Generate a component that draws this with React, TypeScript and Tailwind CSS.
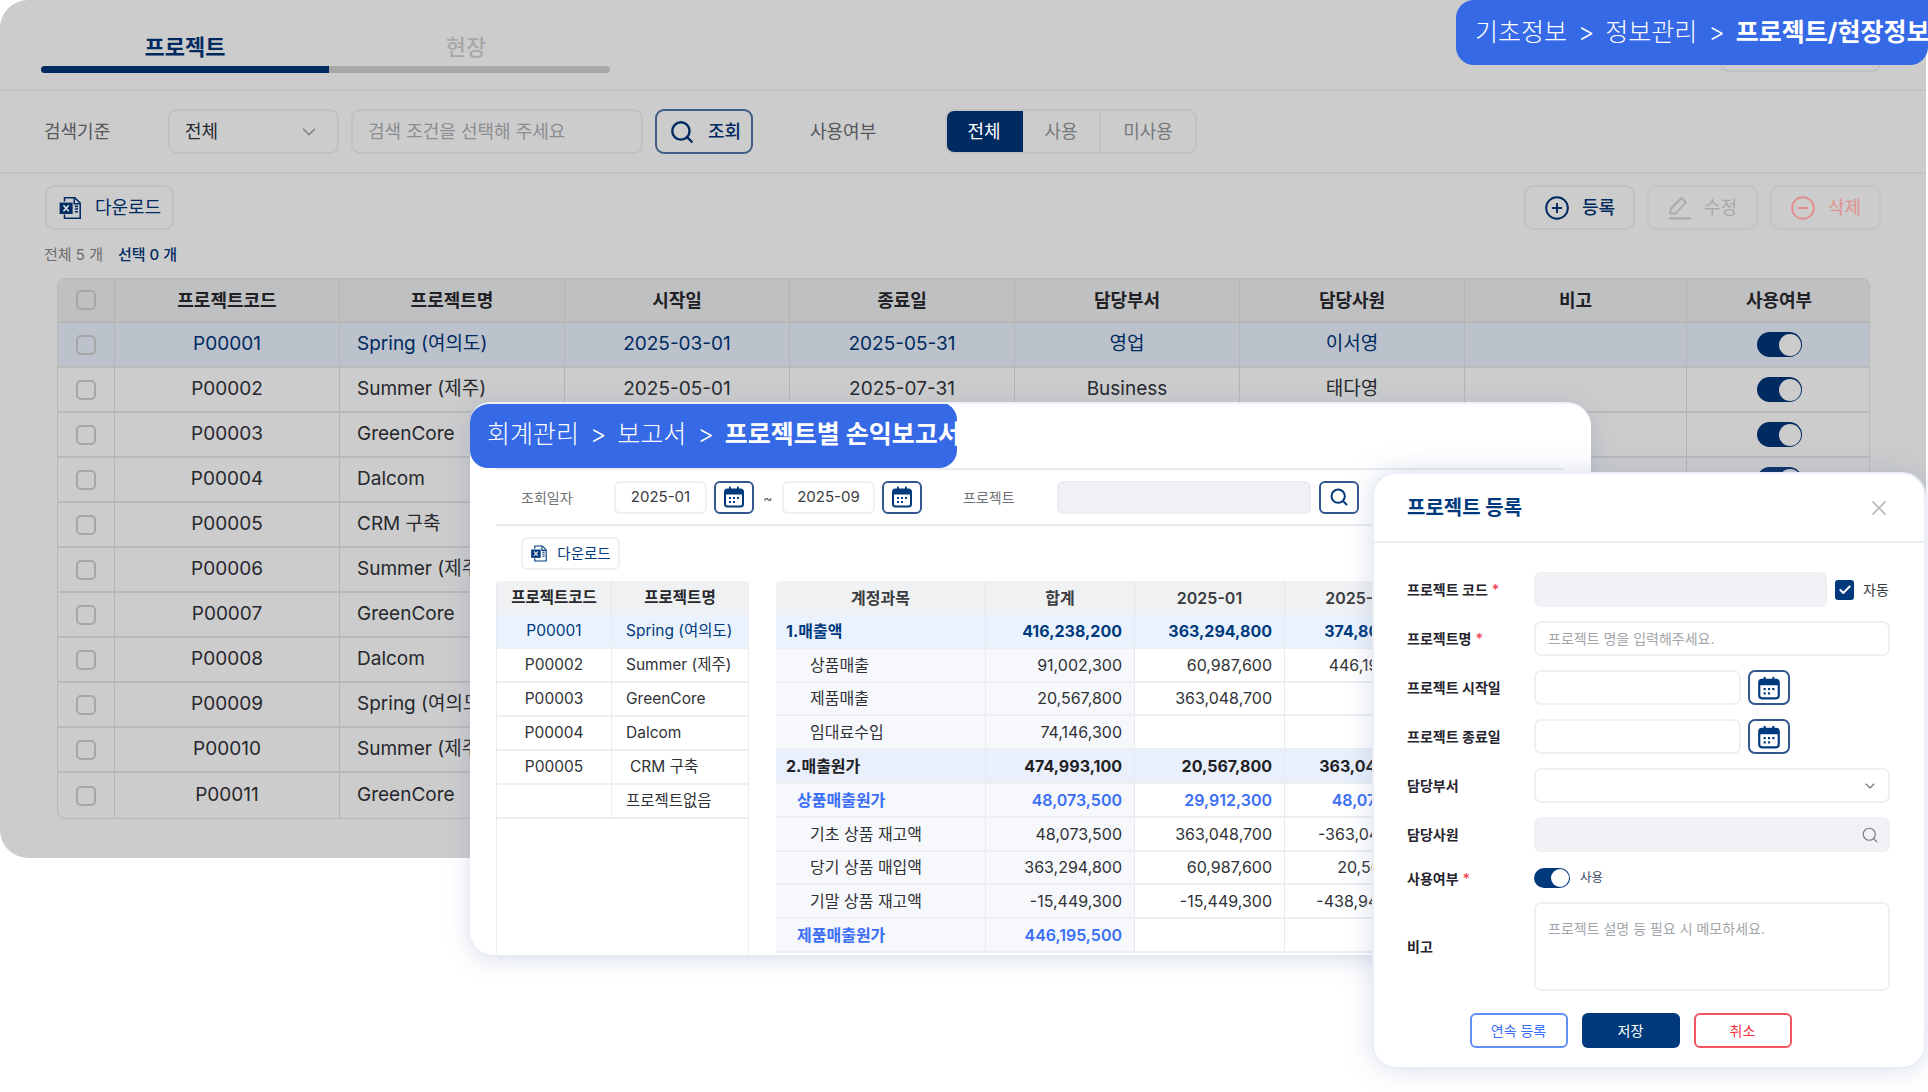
import React from "react";
import { Search, ChevronDown, CirclePlus, CircleMinus, X, Check } from "lucide-react";

const backRows = [
  ["P00001", "Spring (여의도)", "2025-03-01", "2025-05-31", "영업", "이서영"],
  ["P00002", "Summer (제주)", "2025-05-01", "2025-07-31", "Business", "태다영"],
  ["P00003", "GreenCore", "2025-06-01", "2025-08-31", "영업", "이서영"],
  ["P00004", "Dalcom", "2025-07-01", "2025-09-30", "Business", "태다영"],
  ["P00005", "CRM 구축", "2025-07-01", "2025-09-30", "영업", "이서영"],
  ["P00006", "Summer (제주)", "2025-08-01", "2025-10-31", "Business", "태다영"],
  ["P00007", "GreenCore", "2025-08-01", "2025-10-31", "영업", "이서영"],
  ["P00008", "Dalcom", "2025-09-01", "2025-11-30", "Business", "태다영"],
  ["P00009", "Spring (여의도)", "2025-09-01", "2025-11-30", "영업", "이서영"],
  ["P00010", "Summer (제주)", "2025-10-01", "2025-12-31", "Business", "태다영"],
  ["P00011", "GreenCore", "2025-10-01", "2025-12-31", "영업", "이서영"],
];

const reportLeft = [
  ["P00001", "Spring (여의도)"],
  ["P00002", "Summer (제주)"],
  ["P00003", "GreenCore"],
  ["P00004", "Dalcom"],
  ["P00005", "CRM 구축"],
  ["", "프로젝트없음"],
];

type Kind = "head1" | "head2" | "sub" | "item";
const reportRight: { k: Kind; v: string[] }[] = [
  { k: "head1", v: ["1.매출액", "416,238,200", "363,294,800", "374,800,100"] },
  { k: "item", v: ["상품매출", "91,002,300", "60,987,600", "446,195,500"] },
  { k: "item", v: ["제품매출", "20,567,800", "363,048,700", ""] },
  { k: "item", v: ["임대료수입", "74,146,300", "", ""] },
  { k: "head2", v: ["2.매출원가", "474,993,100", "20,567,800", "363,048,700"] },
  { k: "sub", v: ["상품매출원가", "48,073,500", "29,912,300", "48,073,500"] },
  { k: "item", v: ["기초 상품 재고액", "48,073,500", "363,048,700", "-363,048,700"] },
  { k: "item", v: ["당기 상품 매입액", "363,294,800", "60,987,600", "20,567,800"] },
  { k: "item", v: ["기말 상품 재고액", "-15,449,300", "-15,449,300", "-438,949,300"] },
  { k: "sub", v: ["제품매출원가", "446,195,500", "", ""] },
];

function ExcelIcon({ size, color }: { size: number; color: string }) {
  return (
    <svg width={size} height={size} viewBox="0 0 24 24" fill="none">
      <path d="M6 6V2.5h9.5L20.5 7.5V21.5H6V18" stroke={color} strokeWidth="1.4" />
      <path d="M15 3v5h5" stroke={color} strokeWidth="1.4" />
      <rect x="1.5" y="7" width="12" height="10.5" fill={color} />
      <path d="M5 9.5l5 5.5M10 9.5l-5 5.5" stroke="#dfe3ea" strokeWidth="1.5" />
      <path d="M15.5 10.5h3M15.5 13h3M15.5 15.5h3" stroke={color} strokeWidth="1.4" />
    </svg>
  );
}

function CalendarIcon({ size }: { size: number }) {
  return (
    <svg width={size} height={size} viewBox="0 0 24 24" fill="none">
      <rect x="3" y="4.5" width="18" height="17" rx="2.5" stroke="#003a7d" strokeWidth="2" />
      <path d="M3 9.5V6.5a2 2 0 0 1 2-2h14a2 2 0 0 1 2 2v3z" fill="#003a7d" />
      <path d="M8 2.5v4M16 2.5v4" stroke="#003a7d" strokeWidth="2" strokeLinecap="round" />
      <rect x="7" y="12" width="2" height="2" fill="#003a7d" />
      <rect x="11" y="12" width="2" height="2" fill="#003a7d" />
      <rect x="15" y="12" width="2" height="2" fill="#003a7d" />
      <rect x="7" y="16" width="2" height="2" fill="#003a7d" />
      <rect x="11" y="16" width="2" height="2" fill="#003a7d" />
    </svg>
  );
}

function PenIcon() {
  return (
    <svg width="24" height="24" viewBox="0 0 24 24" fill="none" stroke="#a9a9a9" strokeWidth="1.8">
      <path d="M2 17.5l1-5L13.5 2l4.5 4.5L7.5 17.5z" strokeLinejoin="round" />
      <path d="M1 22.5h22" strokeWidth="2.2" />
    </svg>
  );
}

function BackToggle() {
  return (
    <div className="w-[45px] h-[25px] rounded-full bg-[#002a60] flex items-center justify-end pr-[1px]">
      <div className="w-[22px] h-[22px] rounded-full bg-[#cccccc]" />
    </div>
  );
}

function BackCheckbox() {
  return <div className="w-[20px] h-[20px] rounded-[5px] border-2 border-[#a6a6a6]" />;
}

function BackTable() {
  const cols = "grid grid-cols-[57px_225px_225px_225px_225px_225px_225px_222px_184px]";
  const heads = ["프로젝트코드", "프로젝트명", "시작일", "종료일", "담당부서", "담당사원", "비고", "사용여부"];
  return (
    <div className="ml-[57px] mt-[12px] w-[1813px] rounded-[8px] border border-[#b8b8b8] overflow-hidden">
      <div className={`${cols} h-[44px] bg-[#bfc0c2] border-b-2 border-[#b6b6b6]`}>
        <div className="flex items-center justify-center border-r border-[#b4b4b4]">
          <BackCheckbox />
        </div>
        {heads.map((h, i) => (
          <div
            key={h}
            className={`flex items-center justify-center text-[18px] font-semibold text-[#1f2125] ${i < 7 ? "border-r border-[#b4b4b4]" : ""}`}
          >
            {h}
          </div>
        ))}
      </div>
      {backRows.map((r, idx) => {
        const sel = idx === 0;
        const tc = sel ? "text-[#002a60]" : "text-[#26282c]";
        return (
          <div
            key={r[0]}
            className={`${cols} h-[45px] border-b-2 border-[#b9b9b9] last:border-b-0 ${sel ? "bg-[#bbc2cc]" : ""} text-[19px] ${tc}`}
          >
            <div className="flex items-center justify-center border-r border-[#b4b4b4]">
              <BackCheckbox />
            </div>
            {r.map((c, i) => (
              <div
                key={i}
                className={`flex items-center border-r border-[#b4b4b4] whitespace-nowrap ${i === 1 ? "justify-start pl-[17px]" : "justify-center"}`}
              >
                {c}
              </div>
            ))}
            <div className="border-r border-[#b4b4b4]" />
            <div className="flex items-center justify-center">
              <BackToggle />
            </div>
          </div>
        );
      })}
    </div>
  );
}

function BackWindow() {
  const actionBtn = "w-[111px] h-[45px] rounded-[9px] border-2 flex items-center justify-center gap-[12px] text-[18px]";
  return (
    <div className="w-[1926px] h-[858px] bg-[#cccccc] rounded-l-[28px] overflow-hidden">
      <div className="h-[91px] border-b-2 border-[#c2c2c2] pl-[41px] pr-[45px] flex justify-between">
        <div className="w-[569px] pt-[31px]">
          <div className="flex h-[35px]">
            <div className="w-[288px] text-center text-[22px] font-bold text-[#002a60] leading-[32px]">프로젝트</div>
            <div className="w-[274px] text-center text-[22px] font-medium text-[#a8a8a8] leading-[32px]">현장</div>
          </div>
          <div className="h-[7px] rounded-full bg-[#a8a8a8] overflow-hidden">
            <div className="w-[288px] h-full bg-[#002a60]" />
          </div>
        </div>
        <div className="mt-[27px] w-[161px] h-[45px] rounded-[9px] border-2 border-[#bfc0c2]" />
      </div>

      <div className="h-[83px] border-b-2 border-[#c2c2c2] pl-[44px] flex items-center text-[18px]">
        <div className="w-[124px] text-[#55575b]">검색기준</div>
        <div className="w-[171px] h-[45px] rounded-[9px] border-2 border-[#bfc1c5] flex items-center justify-between pl-[15px] pr-[17px] text-[#26282c]">
          전체
          <ChevronDown size={22} strokeWidth={1.6} color="#7c7f85" />
        </div>
        <div className="ml-[12px] w-[292px] h-[45px] rounded-[9px] border-2 border-[#bfc1c5] flex items-center pl-[15px] text-[#8b8d91]">
          검색 조건을 선택해 주세요
        </div>
        <div className="ml-[12px] w-[98px] h-[45px] rounded-[9px] border-2 border-[#3e5c85] flex items-center pl-[12px] gap-[13px] text-[#002a60]">
          <Search size={26} strokeWidth={2.2} color="#002a60" />
          <span className="font-medium">조회</span>
        </div>
        <div className="ml-[57px] w-[135px] text-[#55575b]">사용여부</div>
        <div className="flex h-[45px] rounded-[9px] border-2 border-[#bfc1c5] overflow-hidden">
          <div className="-m-[2px] mr-0 w-[78px] bg-[#002a60] text-white flex items-center justify-center rounded-l-[9px]">전체</div>
          <div className="w-[78px] flex items-center justify-center text-[#77797d] border-r-2 border-[#bfc1c5]">사용</div>
          <div className="w-[94px] flex items-center justify-center text-[#77797d]">미사용</div>
        </div>
      </div>

      <div className="pt-[11px] pl-[45px] pr-[45px] flex justify-between">
        <div className="w-[129px] h-[45px] rounded-[9px] border-2 border-[#bfc1c5] flex items-center justify-center gap-[11px] text-[18px] text-[#002a60]">
          <ExcelIcon size={26} color="#002a60" />
          다운로드
        </div>
        <div className="flex gap-[12px]">
          <div className={`${actionBtn} border-[#bfc1c5] text-[#002a60] font-medium`}>
            <CirclePlus size={26} strokeWidth={1.8} color="#002a60" />
            등록
          </div>
          <div className={`${actionBtn} border-[#c4c5c7] text-[#a9a9a9]`}>
            <PenIcon />
            수정
          </div>
          <div className={`${actionBtn} border-[#c4c5c7] text-[#e09090]`}>
            <CircleMinus size={26} strokeWidth={1.8} color="#e09090" />
            삭제
          </div>
        </div>
      </div>

      <div className="pl-[44px] mt-[14px] h-[22px] flex items-center gap-[15px] text-[15px]">
        <span className="text-[#6a6c70]">전체 5 개</span>
        <span className="text-[#002a60] font-medium">선택 0 개</span>
      </div>

      <BackTable />
    </div>
  );
}

function Breadcrumb({ a, b, c, className }: { a: string; b: string; c: string; className: string }) {
  return (
    <div className={`bg-[#3669e5] text-white flex items-center text-[25px] whitespace-nowrap ${className}`}>
      <span className="font-light">{a}</span>
      <span className="mx-[11px] font-light">&gt;</span>
      <span className="font-light">{b}</span>
      <span className="mx-[11px] font-light">&gt;</span>
      <span className="font-bold">{c}</span>
    </div>
  );
}

function ReportLeft() {
  const cols = "grid grid-cols-[115px_1fr]";
  return (
    <div className="w-[253px] border-x border-[#e9ecf1] rounded-t-[4px] overflow-hidden flex flex-col text-[15.5px]">
      <div className={`${cols} h-[34px] bg-[#f0f1f3] font-semibold text-[#26282c] text-center`}>
        <div className="flex items-center justify-center border-r border-[#e2e4e8]">프로젝트코드</div>
        <div className="flex items-center justify-center">프로젝트명</div>
      </div>
      {reportLeft.map((r, i) => (
        <div
          key={i}
          className={`${cols} h-[34px] border-b-2 border-[#eceef2] ${i === 0 ? "bg-[#eaf3fd] text-[#003a7d]" : "text-[#303236]"}`}
        >
          <div className="flex items-center justify-center border-r border-[#e9ecf1]">{r[0]}</div>
          <div className={`flex items-center ${r[0] === "P00005" ? "pl-[18px]" : "pl-[14px]"}`}>{r[1]}</div>
        </div>
      ))}
    </div>
  );
}

function ReportRight() {
  const cols = "grid grid-cols-[210px_149px_150px_150px]";
  return (
    <div className="w-[660px] flex flex-col text-[16px]">
      <div className={`${cols} h-[34px] bg-[#f0f1f3] font-semibold text-[#3a3c40] rounded-tl-[4px]`}>
        {["계정과목", "합계", "2025-01", "2025-02"].map((h) => (
          <div key={h} className="flex items-center justify-center border-r border-[#e2e4e8]">
            {h}
          </div>
        ))}
      </div>
      {reportRight.map((r, i) => {
        const color =
          r.k === "head1"
            ? "text-[#003a7d] font-bold"
            : r.k === "head2"
              ? "text-[#1f2125] font-bold"
              : r.k === "sub"
                ? "text-[#3b6ef6] font-semibold"
                : "text-[#303236]";
        const rowBg = r.k === "head1" ? "bg-[#eaf3fd]" : r.k === "head2" ? "bg-[#e9f0fc]" : "";
        return (
          <div key={i} className={`${cols} h-[33.8px] border-b-2 border-[#eceef2] ${rowBg} ${color}`}>
            {r.v.map((c, j) => (
              <div
                key={j}
                className={`flex items-center border-r border-[#e6e9ee] whitespace-nowrap ${rowBg === "" && j < 2 ? "bg-[#f6f8fc]" : ""} ${
                  j === 0
                    ? r.k === "item"
                      ? "pl-[34px]"
                      : r.k === "sub"
                        ? "pl-[21px]"
                        : "pl-[10px]"
                    : "justify-end pr-[12px]"
                }`}
              >
                {c}
              </div>
            ))}
          </div>
        );
      })}
    </div>
  );
}

function ReportWindow() {
  const inputCls = "h-[33px] rounded-[6px] border-2 border-[#eef0f4] flex items-center justify-center text-[15px] text-[#3a3c40]";
  const iconBtn = "h-[33px] w-[40px] rounded-[6px] border-2 border-[#33588f] flex items-center justify-center";
  return (
    <div className="absolute left-[470px] top-[402px] w-[1121px] h-[553px] bg-white rounded-[24px] rounded-tl-[20px] overflow-hidden shadow-[0_4px_24px_rgba(120,140,180,0.3)] border-t-2 border-[#eef0f5]">
      <Breadcrumb a="회계관리" b="보고서" c="프로젝트별 손익보고서" className="w-[487px] h-[66px] -mt-[2px] rounded-[18px] pl-[17px]" />
      <div className="ml-[26px] mr-[28px] h-[58px] border-y-2 border-[#e9ebf0] flex items-center text-[14px]">
        <span className="ml-[25px] w-[93px] text-[#6f7175]">조회일자</span>
        <div className={`${inputCls} w-[93px]`}>2025-01</div>
        <div className={`${iconBtn} ml-[7px]`}>
          <CalendarIcon size={24} />
        </div>
        <span className="w-[28px] text-center text-[#55575b]">~</span>
        <div className={`${inputCls} w-[93px]`}>2025-09</div>
        <div className={`${iconBtn} ml-[7px]`}>
          <CalendarIcon size={24} />
        </div>
        <span className="ml-[41px] w-[94px] text-[#6f7175]">프로젝트</span>
        <div className="w-[254px] h-[33px] rounded-[6px] border-2 border-[#eceef2] bg-[#f0f1f4]" />
        <div className={`${iconBtn} ml-[8px]`}>
          <Search size={20} strokeWidth={2.4} color="#003a7d" />
        </div>
      </div>
      <div className="ml-[51px] mt-[11px] w-[99px] h-[33px] rounded-[6px] border-2 border-[#eef0f4] flex items-center justify-center gap-[8px] text-[14.5px] text-[#003a7d]">
        <ExcelIcon size={19} color="#003a7d" />
        다운로드
      </div>
      <div className="ml-[26px] mt-[11px] flex gap-[27px] h-[373px]">
        <ReportLeft />
        <ReportRight />
      </div>
    </div>
  );
}

function FieldRow({ label, req, children, tall }: { label: string; req?: boolean; children: React.ReactNode; tall?: boolean }) {
  return (
    <div className={`flex items-center ${tall ? "h-[89px]" : "h-[35px]"}`}>
      <div className="w-[127px] text-[14px] font-semibold text-[#26242e] whitespace-nowrap">
        {label}
        {req && <span className="ml-[4px] text-[#f04452]">*</span>}
      </div>
      <div className="flex-1 flex items-center h-full">{children}</div>
    </div>
  );
}

function Modal() {
  const input = "h-[35px] rounded-[7px] border-2 border-[#eef0f4]";
  const calBtn = "ml-[7px] w-[42px] h-[35px] rounded-[7px] border-2 border-[#33588f] flex items-center justify-center";
  const footBtn = "w-[98px] h-[35px] rounded-[6px] flex items-center justify-center text-[14px]";
  return (
    <div className="absolute left-[1372px] top-[472px] w-[554px] h-[597px] bg-white rounded-[24px] border-2 border-[#e9eef6] shadow-[0_0_28px_rgba(120,140,180,0.28)] flex flex-col">
      <div className="h-[69px] border-b-2 border-[#eceef3] flex items-center justify-between pl-[33px] pr-[33px]">
        <span className="text-[20px] font-bold text-[#003a7d]">프로젝트 등록</span>
        <X size={24} strokeWidth={1.8} color="#bdbfc3" />
      </div>
      <div className="pt-[29px] pl-[33px] pr-[34px] flex flex-col gap-[14px]">
        <FieldRow label="프로젝트 코드" req>
          <div className={`${input} w-[293px] bg-[#f0f2f5]`} />
          <div className="ml-[8px] w-[19px] h-[20px] rounded-[3px] bg-[#003a7d] flex items-center justify-center">
            <Check size={14} strokeWidth={3.5} color="white" />
          </div>
          <span className="ml-[9px] text-[14px] text-[#3a3c40]">자동</span>
        </FieldRow>
        <FieldRow label="프로젝트명" req>
          <div className={`${input} w-full flex items-center pl-[12px] text-[14px] text-[#a3a5a9]`}>프로젝트 명을 입력해주세요.</div>
        </FieldRow>
        <FieldRow label="프로젝트 시작일">
          <div className={`${input} w-[207px]`} />
          <div className={calBtn}>
            <CalendarIcon size={26} />
          </div>
        </FieldRow>
        <FieldRow label="프로젝트 종료일">
          <div className={`${input} w-[207px]`} />
          <div className={calBtn}>
            <CalendarIcon size={26} />
          </div>
        </FieldRow>
        <FieldRow label="담당부서">
          <div className={`${input} w-full flex items-center justify-end pr-[10px]`}>
            <ChevronDown size={16} strokeWidth={1.6} color="#6f7175" />
          </div>
        </FieldRow>
        <FieldRow label="담당사원">
          <div className={`${input} w-full bg-[#f0f2f5] flex items-center justify-end pr-[9px]`}>
            <Search size={18} strokeWidth={1.6} color="#7c7f85" />
          </div>
        </FieldRow>
        <div className="flex items-center h-[20px] mt-[2px]">
          <div className="w-[127px] text-[14px] font-semibold text-[#26242e]">
            사용여부<span className="ml-[4px] text-[#f04452]">*</span>
          </div>
          <div className="w-[36px] h-[20px] rounded-full bg-[#003a7d] flex items-center justify-end pr-[1px]">
            <div className="w-[18px] h-[18px] rounded-full bg-white" />
          </div>
          <span className="ml-[10px] text-[12.5px] text-[#3a4a66]">사용</span>
        </div>
        <FieldRow label="비고" tall>
          <div className="w-full h-[89px] rounded-[7px] border-2 border-[#eef0f4] pl-[12px] pt-[15px] text-[14px] leading-[20px] text-[#a3a5a9]">
            프로젝트 설명 등 필요 시 메모하세요.
          </div>
        </FieldRow>
      </div>
      <div className="mt-[22px] flex justify-center gap-[14px] pr-[34px] -ml-[3px]">
        <div className={`${footBtn} border-2 border-[#5f8ff7] text-[#3b6ef6]`}>연속 등록</div>
        <div className={`${footBtn} bg-[#003a7d] text-white`}>저장</div>
        <div className={`${footBtn} border-2 border-[#f2555f] text-[#f0323f]`}>취소</div>
      </div>
    </div>
  );
}

export default function App() {
  return (
    <div className="relative w-[1928px] h-[1092px] bg-white overflow-hidden [font-family:Inter,'Noto_Sans_CJK_KR',sans-serif]">
      <BackWindow />
      <Breadcrumb
        a="기초정보"
        b="정보관리"
        c="프로젝트/현장정보"
        className="absolute right-0 top-0 w-[472px] h-[65px] rounded-b-[18px] rounded-tl-[18px] pl-[19px]"
      />
      <ReportWindow />
      <Modal />
    </div>
  );
}
